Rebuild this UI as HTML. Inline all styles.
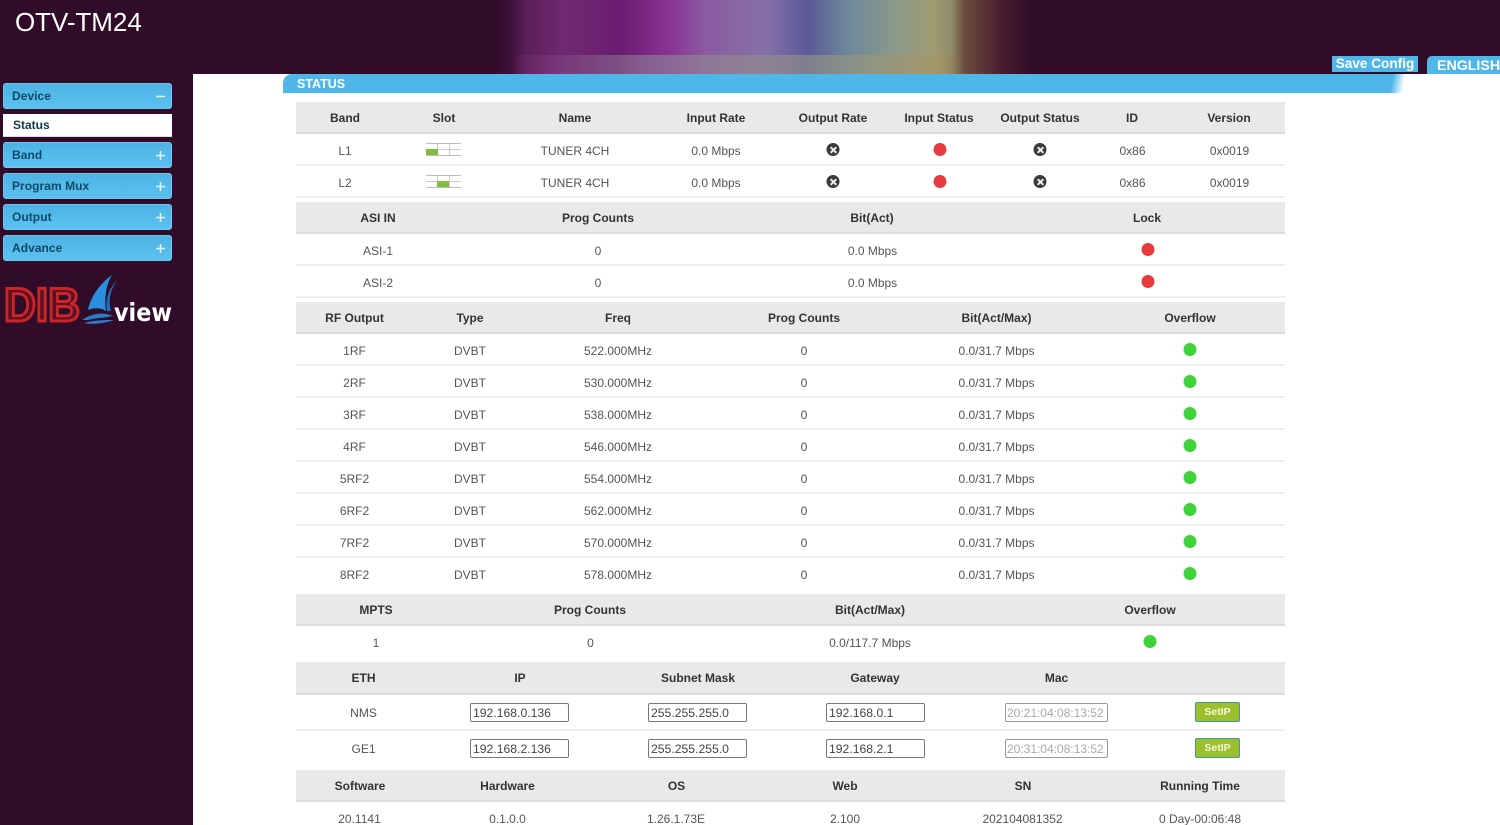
<!DOCTYPE html>
<html><head><meta charset="utf-8"><title>OTV-TM24</title>
<style>
html,body{margin:0;padding:0;width:1500px;height:825px;overflow:hidden}
#wrap{width:1500px;height:825px;overflow:hidden;position:relative;background:#300c28;font-family:"Liberation Sans",sans-serif;font-size:12px;color:#555}
#ban{position:absolute;left:0;top:0;width:1500px;height:74px;background:linear-gradient(90deg,#300c28 0,#300c28 490px,#3a1035 510px,#5a1f58 525px,#6f2a72 565px,#6b1c70 620px,#8a3595 672px,#8a5aa0 705px,#8670a8 765px,#5a5a98 808px,#6f8a9a 850px,#8f9a88 900px,#a09c72 932px,#8f8a68 952px,#6a4c3c 965px,#4a2030 1000px,#300c28 1032px)}
#ban2{position:absolute;left:510px;top:55px;width:450px;height:19px;background:linear-gradient(90deg,rgba(120,80,120,0),rgba(125,60,125,.55) 40px,rgba(140,130,150,.6) 130px,rgba(150,150,130,.65) 340px,rgba(165,150,100,.7) 430px,rgba(120,90,70,.3))}
#title{position:absolute;left:15px;top:7px;font-size:26px;line-height:30px;color:#fff;letter-spacing:-.05px}
#main{position:absolute;left:193px;top:74px;width:1307px;height:751px;background:#fff}
#bar{position:absolute;left:283px;top:74px;width:1121px;height:19px;background:#4fb7e7;border-radius:9px 0 0 0;color:#fff;font-weight:bold;font-size:12.5px;line-height:21px;text-indent:14px}
#bar:after{content:"";position:absolute;right:0;top:0;width:20px;height:19px;background:linear-gradient(100deg,#4fb7e7 40%,#fff 95%)}
#save{position:absolute;left:1332px;top:56px;width:86px;height:16px;background:#4fb7e7;color:#fff;font-weight:bold;font-size:13.6px;line-height:15px;text-align:center;white-space:nowrap}
#eng{position:absolute;left:1427px;top:56px;width:73px;height:18px;background:#4fb7e7;border-radius:5px 0 0 0;color:#fff;font-weight:bold;font-size:14.2px;line-height:21px;text-indent:10px;white-space:nowrap}
.m{position:absolute;left:3px;width:169px;height:26px;box-sizing:border-box;border-radius:3px;border:1px solid #6cc8f0;background:linear-gradient(#4cb3e4,#5cc1ef);color:#0e4a68;font-weight:bold;font-size:12px;line-height:25px;padding-left:8px;letter-spacing:.05px}
.m svg{position:absolute;left:151px;top:7px}
#st{position:absolute;left:3px;top:114px;width:169px;height:23px;background:#fff;border-bottom:1px solid #dde;box-sizing:border-box;color:#12384e;font-weight:bold;font-size:12px;line-height:23px;padding-left:10px}
.r{position:absolute;left:0;width:1500px}
.r:before{content:"";position:absolute;left:296px;width:989px;top:0;bottom:0;box-sizing:border-box}
.h:before{background:#e9e9e9;border-bottom:2px solid #dcdcdc}
.d:before{border-bottom:2px solid #efefef}
.r span{position:absolute;top:0;margin-top:1px;transform:translateX(-50%);white-space:nowrap;line-height:inherit}
.h{color:#333;font-weight:bold}
.h span{color:#333}
.x,.o,.g{position:absolute;width:13px;height:13px;border-radius:50%;transform:translateX(-50%)}
.o{background:#e63b3f}.g{background:#3fd23c}
.x{background:#3a3a3a}
.x:before,.x:after{content:"";position:absolute;left:2.5px;top:5.5px;width:8px;height:2px;background:#eee;transform:rotate(45deg)}
.x:after{transform:rotate(-45deg)}
.sl{position:absolute;left:426px;top:9px;width:35px;height:13px;box-sizing:border-box;border-top:1px solid #bbb;border-bottom:1px solid #bbb;background:#fff}
.sl:before{content:"";position:absolute;left:11px;top:0;width:11px;height:11px;border-left:1px solid #ccc;border-right:1px solid #ccc}
.sl:after{content:"";position:absolute;left:0;right:0;top:5px;height:1px;background:#ccc}
.sl b{position:absolute;top:5px;width:12px;height:6px;background:#82bd40;z-index:1}
.in{position:absolute;top:8px;width:99px;height:19px;box-sizing:border-box;border:1px solid #777;border-radius:2px;background:#fff;font-size:12.2px;line-height:18px;padding-left:2px;color:#444;white-space:nowrap;overflow:hidden}
.mc{width:103px;color:#aaa;border-color:#999;letter-spacing:-.1px;padding-left:1px}
.bt{position:absolute;left:1195px;top:7px;width:45px;height:20px;box-sizing:border-box;border:1px solid #3f9aa0;border-radius:2px;background:#9cc02c;color:#f4f8dc;font-weight:bold;font-size:10.5px;line-height:18px;text-align:center}
</style></head><body><div id="wrap">
<div id="ban"></div><div id="ban2"></div>
<div id="title">OTV-TM24</div>
<div id="main"></div>
<div id="bar">STATUS</div>
<div id="save">Save Config</div>
<div id="eng">ENGLISH</div>

<div class="m" style="top:83px">Device<svg width="11" height="11"><path d="M1 5.5H10" stroke="#dff1fa" stroke-width="1.6"/></svg></div>
<div id="st">Status</div>
<div class="m" style="top:142px">Band<svg width="11" height="11"><path d="M1 5.5H10M5.5 1V10" stroke="#dff1fa" stroke-width="1.6"/></svg></div>
<div class="m" style="top:173px">Program Mux<svg width="11" height="11"><path d="M1 5.5H10M5.5 1V10" stroke="#dff1fa" stroke-width="1.6"/></svg></div>
<div class="m" style="top:204px">Output<svg width="11" height="11"><path d="M1 5.5H10M5.5 1V10" stroke="#dff1fa" stroke-width="1.6"/></svg></div>
<div class="m" style="top:235px">Advance<svg width="11" height="11"><path d="M1 5.5H10M5.5 1V10" stroke="#dff1fa" stroke-width="1.6"/></svg></div>

<svg style="position:absolute;left:0;top:270px" width="180" height="60">
<text x="4" y="51" font-family="Liberation Sans" font-weight="bold" font-size="47" textLength="76" lengthAdjust="spacingAndGlyphs" fill="#5a1220" stroke="#cc2529" stroke-width="3">DIB</text>
<path d="M112 5C102 12 91 25 88 40C95 37 102 38 106 41C104 28 106 15 112 5Z" fill="#2a8fdc"/>
<path d="M117 11C110 20 108 30 111 41L107 41C105 29 109 18 117 11Z" fill="#1f6fb8"/>
<path d="M82 50C92 43 104 42 113 46C104 48 94 48 88 50ZM84 53C94 50 106 50 114 50C106 53 94 55 84 53Z" fill="#2a7cc4"/>
<text x="114" y="51" font-family="DejaVu Sans" font-weight="bold" font-size="25" textLength="58" lengthAdjust="spacingAndGlyphs" fill="#fff">view</text>
</svg>

<!-- Band -->
<div class="r h" style="top:102px;height:32px;line-height:31px"><span style="left:345px">Band</span><span style="left:444px">Slot</span><span style="left:575px">Name</span><span style="left:716px">Input Rate</span><span style="left:833px">Output Rate</span><span style="left:939px">Input Status</span><span style="left:1040px">Output Status</span><span style="left:1132px">ID</span><span style="left:1229px">Version</span></div>
<div class="r d" style="top:134px;height:32px;line-height:32px"><span style="left:345px">L1</span><div class="sl"><b style="left:0"></b></div><span style="left:575px">TUNER 4CH</span><span style="left:716px">0.0 Mbps</span><div class="x" style="left:833px;top:9px"></div><div class="o" style="left:939.5px;top:9px"></div><div class="x" style="left:1040px;top:9px"></div><span style="left:1132.5px">0x86</span><span style="left:1229.5px">0x0019</span></div>
<div class="r d" style="top:166px;height:32px;line-height:32px"><span style="left:345px">L2</span><div class="sl"><b style="left:11px"></b></div><span style="left:575px">TUNER 4CH</span><span style="left:716px">0.0 Mbps</span><div class="x" style="left:833px;top:9px"></div><div class="o" style="left:939.5px;top:9px"></div><div class="x" style="left:1040px;top:9px"></div><span style="left:1132.5px">0x86</span><span style="left:1229.5px">0x0019</span></div>

<!-- ASI -->
<div class="r h" style="top:202px;height:32px;line-height:31px"><span style="left:378px">ASI IN</span><span style="left:598px">Prog Counts</span><span style="left:872px">Bit(Act)</span><span style="left:1147px">Lock</span></div>
<div class="r d" style="top:234px;height:32px;line-height:32px"><span style="left:378px">ASI-1</span><span style="left:598px">0</span><span style="left:872.5px">0.0 Mbps</span><div class="o" style="left:1147.5px;top:9px"></div></div>
<div class="r d" style="top:266px;height:32px;line-height:32px"><span style="left:378px">ASI-2</span><span style="left:598px">0</span><span style="left:872.5px">0.0 Mbps</span><div class="o" style="left:1147.5px;top:9px"></div></div>

<!-- RF -->
<div class="r h" style="top:302px;height:32px;line-height:31px"><span style="left:354.5px">RF Output</span><span style="left:470px">Type</span><span style="left:618px">Freq</span><span style="left:804px">Prog Counts</span><span style="left:996.5px">Bit(Act/Max)</span><span style="left:1190px">Overflow</span></div>
<div class="r d" style="top:334px;height:32px;line-height:32px"><span style="left:354.5px">1RF</span><span style="left:470px">DVBT</span><span style="left:618px">522.000MHz</span><span style="left:804px">0</span><span style="left:996.5px">0.0/31.7 Mbps</span><div class="g" style="left:1190px;top:9px"></div></div>
<div class="r d" style="top:366px;height:32px;line-height:32px"><span style="left:354.5px">2RF</span><span style="left:470px">DVBT</span><span style="left:618px">530.000MHz</span><span style="left:804px">0</span><span style="left:996.5px">0.0/31.7 Mbps</span><div class="g" style="left:1190px;top:9px"></div></div>
<div class="r d" style="top:398px;height:32px;line-height:32px"><span style="left:354.5px">3RF</span><span style="left:470px">DVBT</span><span style="left:618px">538.000MHz</span><span style="left:804px">0</span><span style="left:996.5px">0.0/31.7 Mbps</span><div class="g" style="left:1190px;top:9px"></div></div>
<div class="r d" style="top:430px;height:32px;line-height:32px"><span style="left:354.5px">4RF</span><span style="left:470px">DVBT</span><span style="left:618px">546.000MHz</span><span style="left:804px">0</span><span style="left:996.5px">0.0/31.7 Mbps</span><div class="g" style="left:1190px;top:9px"></div></div>
<div class="r d" style="top:462px;height:32px;line-height:32px"><span style="left:354.5px">5RF2</span><span style="left:470px">DVBT</span><span style="left:618px">554.000MHz</span><span style="left:804px">0</span><span style="left:996.5px">0.0/31.7 Mbps</span><div class="g" style="left:1190px;top:9px"></div></div>
<div class="r d" style="top:494px;height:32px;line-height:32px"><span style="left:354.5px">6RF2</span><span style="left:470px">DVBT</span><span style="left:618px">562.000MHz</span><span style="left:804px">0</span><span style="left:996.5px">0.0/31.7 Mbps</span><div class="g" style="left:1190px;top:9px"></div></div>
<div class="r d" style="top:526px;height:32px;line-height:32px"><span style="left:354.5px">7RF2</span><span style="left:470px">DVBT</span><span style="left:618px">570.000MHz</span><span style="left:804px">0</span><span style="left:996.5px">0.0/31.7 Mbps</span><div class="g" style="left:1190px;top:9px"></div></div>
<div class="r" style="top:558px;height:32px;line-height:32px"><span style="left:354.5px">8RF2</span><span style="left:470px">DVBT</span><span style="left:618px">578.000MHz</span><span style="left:804px">0</span><span style="left:996.5px">0.0/31.7 Mbps</span><div class="g" style="left:1190px;top:9px"></div></div>

<!-- MPTS -->
<div class="r h" style="top:594px;height:32px;line-height:30px"><span style="left:376px">MPTS</span><span style="left:590px">Prog Counts</span><span style="left:870px">Bit(Act/Max)</span><span style="left:1150px">Overflow</span></div>
<div class="r" style="top:626px;height:32px;line-height:32px"><span style="left:376px">1</span><span style="left:590.5px">0</span><span style="left:870px">0.0/117.7 Mbps</span><div class="g" style="left:1150px;top:9px"></div></div>

<!-- ETH -->
<div class="r h" style="top:662px;height:33px;line-height:31px"><span style="left:363.5px">ETH</span><span style="left:520px">IP</span><span style="left:698px">Subnet Mask</span><span style="left:875px">Gateway</span><span style="left:1056.5px">Mac</span></div>
<div class="r d" style="top:695px;height:36px;line-height:35px"><span style="left:363.5px">NMS</span><div class="in" style="left:470px">192.168.0.136</div><div class="in" style="left:648px">255.255.255.0</div><div class="in" style="left:826px">192.168.0.1</div><div class="in mc" style="left:1005px">20:21:04:08:13:52</div><div class="bt">SetIP</div></div>
<div class="r" style="top:731px;height:35px;line-height:34px"><span style="left:363.5px">GE1</span><div class="in" style="left:470px">192.168.2.136</div><div class="in" style="left:648px">255.255.255.0</div><div class="in" style="left:826px">192.168.2.1</div><div class="in mc" style="left:1005px">20:31:04:08:13:52</div><div class="bt">SetIP</div></div>

<!-- Info -->
<div class="r h" style="top:770px;height:32px;line-height:30px"><span style="left:360px">Software</span><span style="left:507.5px">Hardware</span><span style="left:676.5px">OS</span><span style="left:845px">Web</span><span style="left:1023px">SN</span><span style="left:1200px">Running Time</span></div>
<div class="r" style="top:802px;height:23px;line-height:32px"><span style="left:359.5px">20.1141</span><span style="left:507.5px">0.1.0.0</span><span style="left:676px">1.26.1.73E</span><span style="left:845px">2.100</span><span style="left:1022.5px">202104081352</span><span style="left:1200px">0 Day-00:06:48</span></div>
</div></body></html>
